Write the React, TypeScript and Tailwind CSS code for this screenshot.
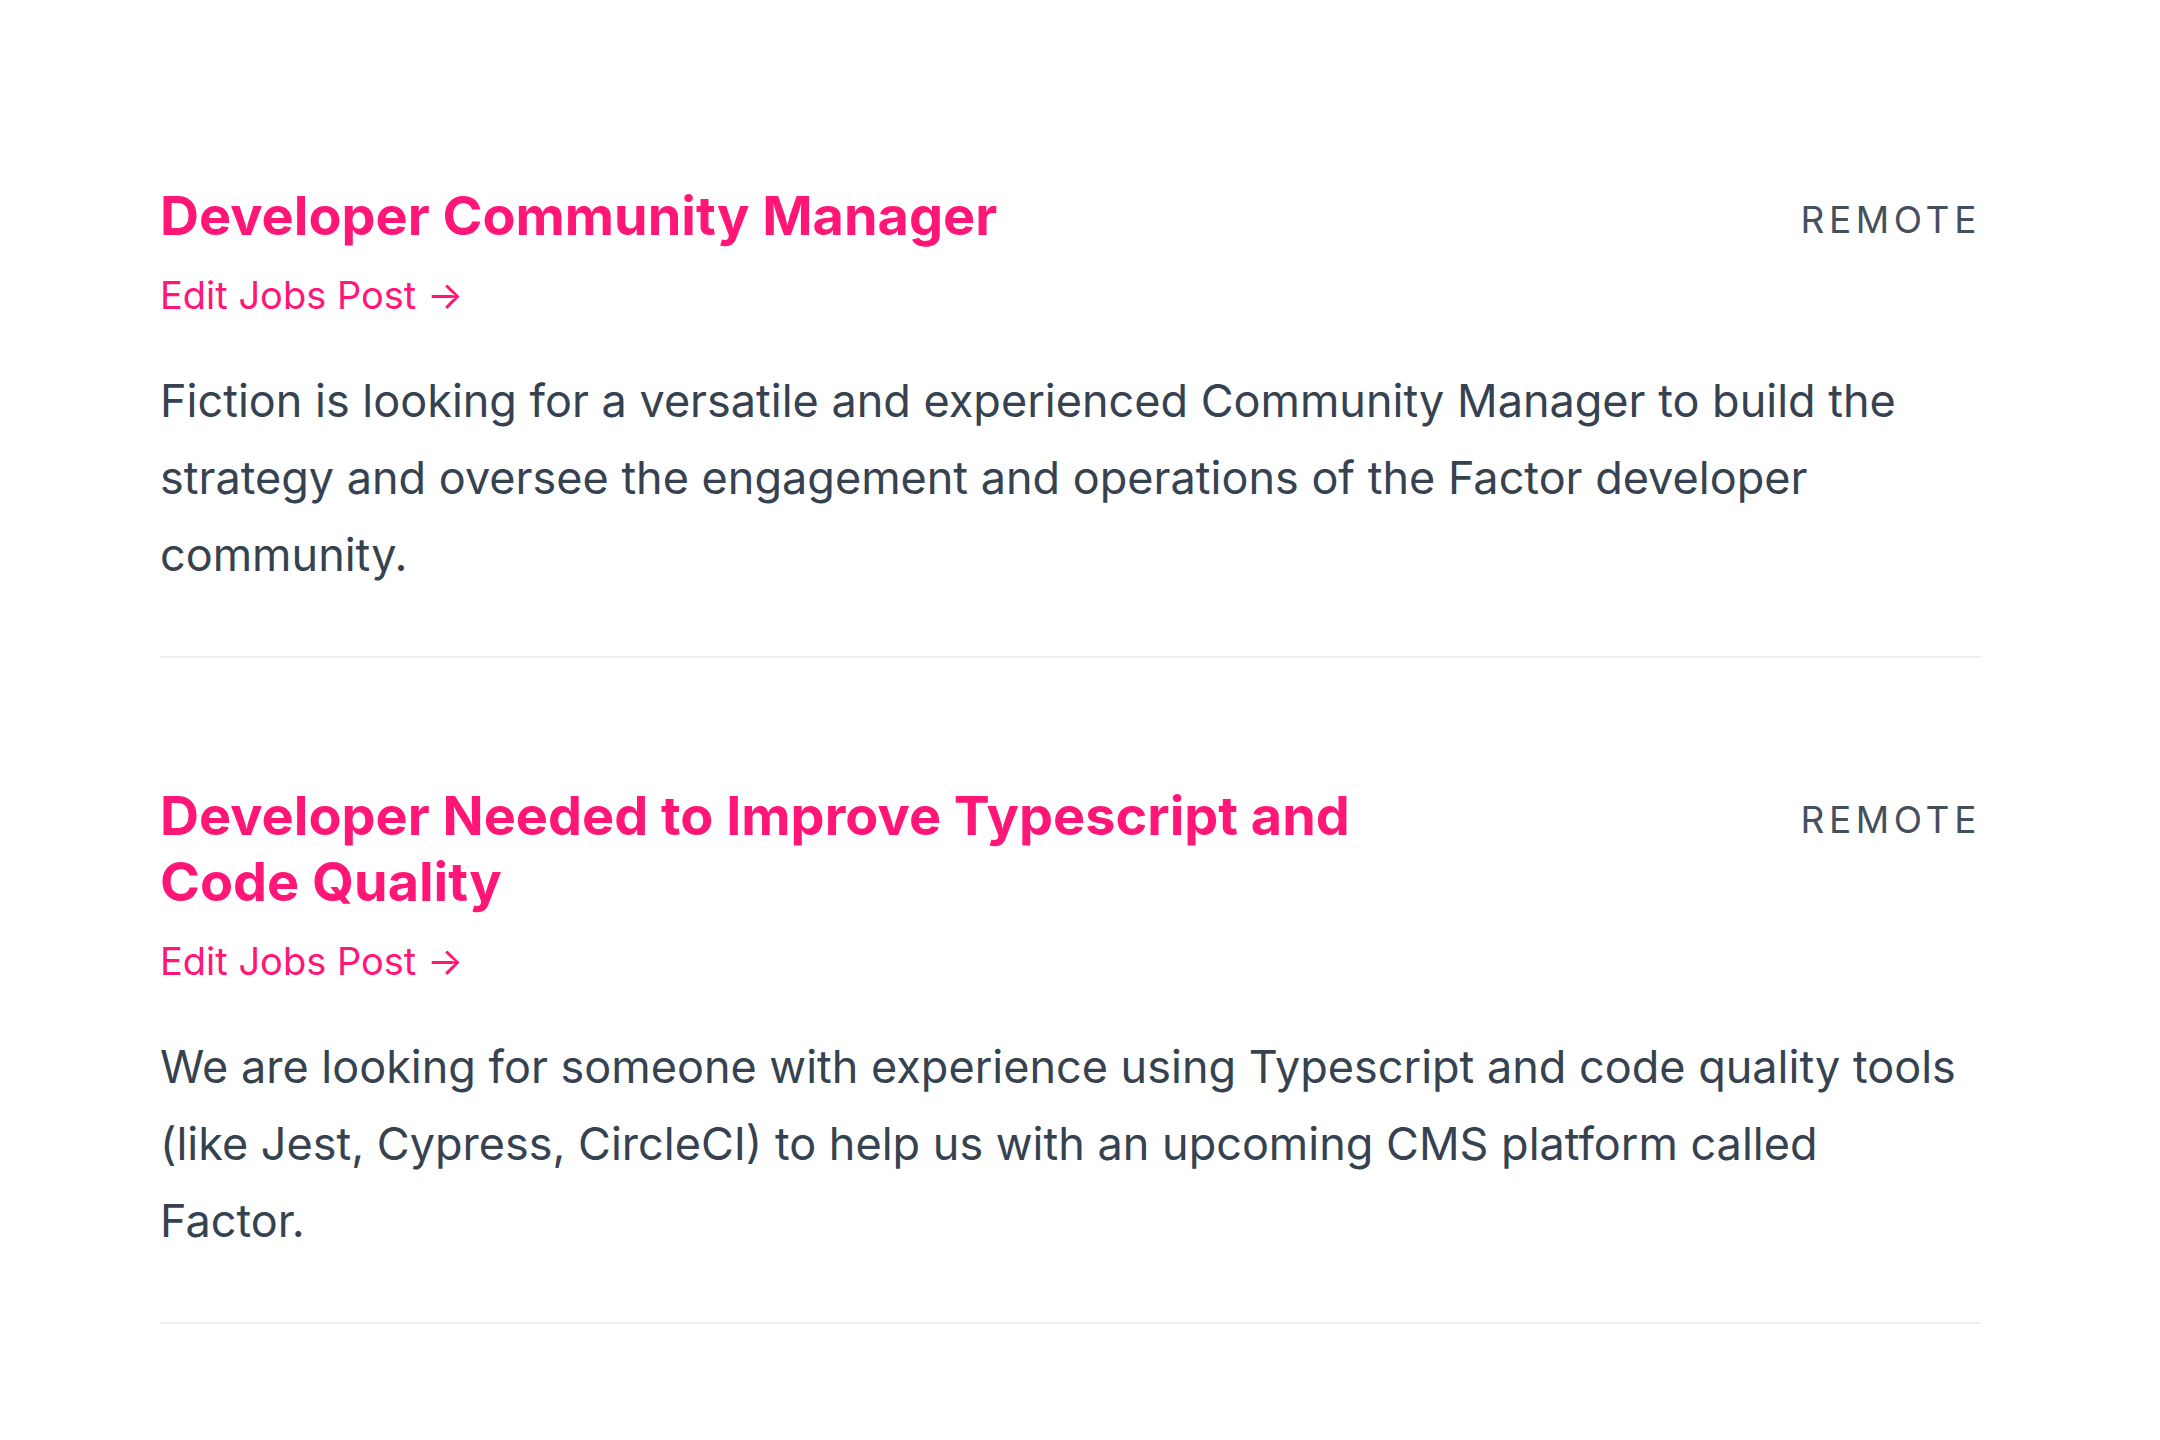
const jobs = [
  {
    id: 'community-manager',
    title: 'Developer Community Manager',
    location: 'Remote',
    description: [
      'Fiction is looking for a versatile and experienced Community Manager to build the',
      'strategy and oversee the engagement and operations of the Factor developer',
      'community.',
    ],
  },
  {
    id: 'typescript-dev',
    title: 'Developer Needed to Improve Typescript and Code Quality',
    location: 'Remote',
    description: [
      'We are looking for someone with experience using Typescript and code quality tools',
      '(like Jest, Cypress, CircleCI) to help us with an upcoming CMS platform called',
      'Factor.',
    ],
  },
];

export default function App() {
  return (
    <div className="min-h-screen bg-white font-['Inter','Noto_Sans',sans-serif]">
      <div className="pl-[160px] pr-[179px] pt-[58px]">
        {jobs.map((job) => (
          <div key={job.id} className="border-b-2 border-[#eceff1] pt-[125px] pb-[63px]">
            <div className="flex items-start justify-between">
              <div className="max-w-[1240px]">
                <h2 className="text-[54px] font-bold leading-[66px] text-[#ff1677]">
                  {job.title}
                </h2>
                <a href="#" className="mt-[19px] block text-[38px] font-normal leading-[54px] text-[#ff1677]">
                  Edit Jobs Post →
                </a>
              </div>
              <div className="pt-[4px] text-[37px] uppercase leading-[66px] tracking-[0.125em] text-[#44505d]">
                {job.location}
              </div>
            </div>
            <p className="mt-[40px] text-[45px] leading-[77px] text-[#36424f]">
              {job.description.map((line, i) => (
                <span key={i}>
                  {line}
                  {i < job.description.length - 1 && <br />}
                </span>
              ))}
            </p>
          </div>
        ))}
      </div>
    </div>
  );
}
